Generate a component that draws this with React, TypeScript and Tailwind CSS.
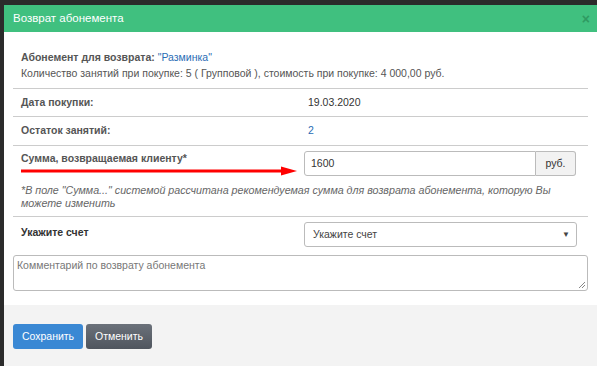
export default function App() {
  return (
    <div className="min-h-screen bg-[#2b2b2b] pl-[4px] pt-[5px] font-['Liberation_Sans',Arial,sans-serif] text-[10.5px] text-[#333]">
      <div className="bg-white">
        <div className="flex h-[27px] items-center justify-between bg-[#40c07f] pl-[9px] pr-[7px]">
          <span className="text-[11.5px] text-white">Возврат абонемента</span>
          <span className="text-[14px] font-bold leading-none text-[#2f9a62]">×</span>
        </div>

        <div className="px-[9px] pb-[14px] pt-[17px]">
          <div className="pb-[7px] pl-[8px] leading-[16px] text-[#555]">
            <div>
              <b>Абонемент для возврата: </b>
              <span className="text-[#2a6db5]">"Разминка"</span>
            </div>
            <div>Количество занятий при покупке: 5 ( Групповой ), стоимость при покупке: 4 000,00 руб.</div>
          </div>

          <div className="grid h-[28px] grid-cols-[283px_1fr] items-center border-t border-[#ccc]">
            <div className="pl-[8px] font-bold text-[#555]">Дата покупки:</div>
            <div className="pl-[12px]">19.03.2020</div>
          </div>
          <div className="grid h-[29px] grid-cols-[283px_1fr] items-center border-t border-[#ccc]">
            <div className="pl-[8px] font-bold text-[#555]">Остаток занятий:</div>
            <div className="pl-[12px] text-[#2a6db5]">2</div>
          </div>

          <div className="border-t border-[#ccc] pb-[6px] pt-[5px]">
            <div className="grid grid-cols-[283px_1fr]">
              <div className="h-[25px] pl-[8px]">
                <div className="font-bold leading-[14px] text-[#555]">Сумма, возвращаемая клиенту*</div>
                <svg width="276" height="12" viewBox="0 0 276 12" className="block">
                  <line x1="0" y1="6" x2="262" y2="6" stroke="#f00" strokeWidth="3" />
                  <polygon points="260,1.5 276,6 260,10.5" fill="#f00" />
                </svg>
              </div>
              <div className="flex h-[25px] w-[280px] pl-[8px]">
                <div className="flex flex-1 items-center rounded-l-[3px] border border-[#bbb] pl-[6px]">1600</div>
                <div className="flex w-[40px] items-center justify-center rounded-r-[3px] border border-l-0 border-[#bbb] bg-[#f2f2f2]">руб.</div>
              </div>
            </div>
            <div className="mt-[8px] pl-[8px] text-[10.7px] italic leading-[13px] text-[#666]">
              *В поле "Сумма..." системой рассчитана рекомендуемая сумма для возврата абонемента, которую Вы
              <br />
              можете изменить
            </div>
          </div>

          <div className="grid grid-cols-[283px_1fr] border-t border-[#ccc] pt-[5px]">
            <div className="pl-[8px] pt-[3px] font-bold leading-[14px] text-[#333]">Укажите счет</div>
            <div className="pl-[8px]">
              <div className="flex h-[25px] w-[273px] items-center justify-between rounded-[3px] border border-[#bbb] pl-[8px] pr-[6px] text-[#444]">
                <span>Укажите счет</span>
                <span className="text-[8px] text-[#444]">▼</span>
              </div>
            </div>
          </div>

          <div className="relative mt-[8px] h-[36px] rounded-[3px] border border-[#bbb] pl-[3px] pt-[2px] text-[#777]">
            Комментарий по возврату абонемента
            <svg width="8" height="8" viewBox="0 0 8 8" className="absolute bottom-[1px] right-[1px]">
              <line x1="7" y1="1" x2="1" y2="7" stroke="#888" strokeWidth="1" />
              <line x1="7" y1="4" x2="4" y2="7" stroke="#888" strokeWidth="1" />
            </svg>
          </div>
        </div>

        <div className="flex h-[62px] gap-[3px] bg-[#f3f3f3] pl-[9px] pt-[19px]">
          <button className="h-[25px] w-[70px] rounded-[3px] bg-[#3a88d4] text-[10.5px] text-white">Сохранить</button>
          <button className="h-[25px] w-[66px] rounded-[3px] bg-gradient-to-b from-[#6b717a] to-[#4f555e] text-[10.5px] text-white">Отменить</button>
        </div>
      </div>
    </div>
  );
}
